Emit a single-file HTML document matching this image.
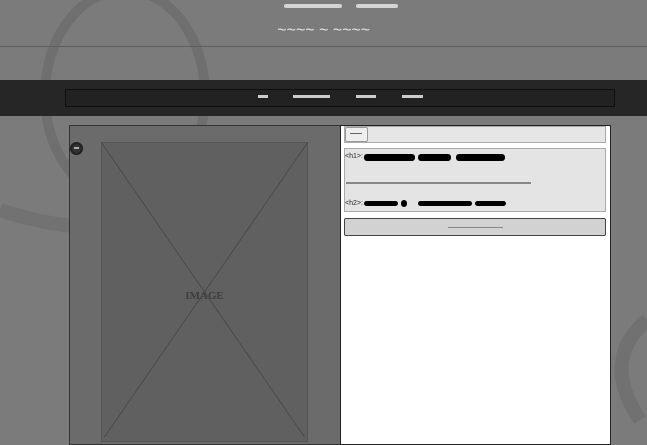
<!DOCTYPE html><html><head><style>
body{margin:0;width:647px;height:437px;overflow:hidden;background:#7b7b7b;font-family:"Liberation Sans",sans-serif;position:relative}
div{position:absolute;box-sizing:border-box}
.b{background:#000;height:7px;border-radius:3px}
</style></head><body>
<svg style="position:absolute;left:0;top:0" width="647" height="437">
<ellipse cx="125" cy="95" rx="80" ry="105" fill="none" stroke="#6f6f6f" stroke-width="10"/>
<path d="M0 210 Q120 250 230 200" fill="none" stroke="#727272" stroke-width="14"/>
<path d="M340 300 Q300 360 340 437" fill="none" stroke="#727272" stroke-width="14"/>
<path d="M647 320 Q600 360 640 420" fill="none" stroke="#717171" stroke-width="14"/>
</svg>
<div style="left:0;top:0;width:647px;height:47px;border-bottom:1px solid #5e5e5e"></div>
<div style="left:284px;top:4px;width:58px;height:4px;background:#d4d4d4;border-radius:2px"></div>
<div style="left:356px;top:4px;width:42px;height:4px;background:#d4d4d4;border-radius:2px"></div>
<div style="left:0;top:22px;width:647px;text-align:center;color:#e2e2e2;font-size:16px;font-style:italic">~~~~ ~ ~~~~</div>
<div style="left:0;top:80px;width:647px;height:36px;background:#262626"></div>
<div style="left:65px;top:89px;width:550px;height:18px;border:1px solid #0f0f0f;background:#222"></div>
<div style="left:258px;top:95px;width:10px;height:3px;background:#ccc"></div>
<div style="left:293px;top:95px;width:37px;height:3px;background:#ccc"></div>
<div style="left:356px;top:95px;width:20px;height:3px;background:#ccc"></div>
<div style="left:402px;top:95px;width:21px;height:3px;background:#ccc"></div>
<div style="left:69px;top:125px;width:272px;height:320px;background:#6b6b6b;border:1px solid #333"></div>
<div style="left:101px;top:142px;width:207px;height:300px;background:#606060;border:1px solid #555"></div>
<svg style="position:absolute;left:101px;top:142px" width="207" height="295"><line x1="0" y1="0" x2="207" y2="300" stroke="#4a4a4a"/><line x1="207" y1="0" x2="0" y2="300" stroke="#4a4a4a"/></svg>
<div style="left:101px;top:290px;width:207px;text-align:center;font-family:'Liberation Serif',serif;font-size:11px;font-weight:bold;color:#3e3e3e">IMAGE</div>
<div style="left:70px;top:142px;width:13px;height:13px;border-radius:50%;background:#333;border:2px solid #222"></div>
<div style="left:74px;top:147px;width:5px;height:2px;background:#aaa"></div>
<div style="left:340px;top:125px;width:271px;height:320px;background:#fff;border:1px solid #222"></div>
<div style="left:344px;top:126px;width:262px;height:17px;background:#e6e6e6;border:1px solid #aaa"></div>
<div style="left:345px;top:127px;width:23px;height:15px;background:#eee;border:1px solid #999;border-radius:2px"></div>
<div style="left:350px;top:133px;width:12px;height:1px;background:#666"></div>
<div style="left:344px;top:148px;width:262px;height:64px;background:#e4e4e4;border:1px solid #aaa"></div>
<div style="left:345px;top:153px;font-size:7px;color:#222">&lt;h1&gt;:</div>
<div class="b" style="left:364px;top:154px;width:51px"></div>
<div class="b" style="left:418px;top:154px;width:33px"></div>
<div class="b" style="left:456px;top:154px;width:49px"></div>
<div style="left:346px;top:182px;width:185px;height:2px;background:#888"></div>
<div style="left:345px;top:200px;font-size:7px;color:#222">&lt;h2&gt;:</div>
<div class="b" style="left:364px;top:201px;width:34px;height:5px"></div>
<div class="b" style="left:401px;top:200px;width:6px"></div>
<div class="b" style="left:418px;top:201px;width:54px;height:5px"></div>
<div class="b" style="left:475px;top:201px;width:31px;height:5px"></div>
<div style="left:344px;top:218px;width:262px;height:18px;background:#d2d2d2;border:1px solid #444;border-radius:2px"></div>
<div style="left:448px;top:227px;width:55px;height:1px;background:#888"></div>
</body></html>
